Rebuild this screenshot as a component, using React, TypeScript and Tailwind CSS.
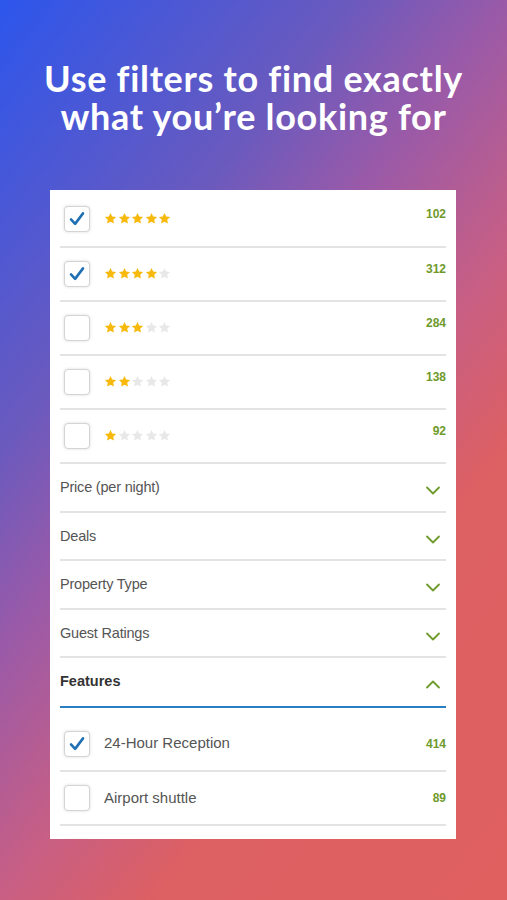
import React from 'react';

const starRows = [
  { stars: 5, count: 102, checked: true },
  { stars: 4, count: 312, checked: true },
  { stars: 3, count: 284, checked: false },
  { stars: 2, count: 138, checked: false },
  { stars: 1, count: 92, checked: false },
];

const sections = ['Price (per night)', 'Deals', 'Property Type', 'Guest Ratings'];

const features = [
  { name: '24-Hour Reception', count: 414, checked: true },
  { name: 'Airport shuttle', count: 89, checked: false },
];

function Star({ filled }: { filled: boolean }) {
  return (
    <svg width="13" height="13" viewBox="0 0 24 24">
      <path
        d="M12 1.8l3.1 6.6 7.2.9-5.3 5 1.4 7.1L12 17.9l-6.4 3.5 1.4-7.1-5.3-5 7.2-.9z"
        fill={filled ? '#f6b90c' : '#e8e8e8'}
      />
    </svg>
  );
}

function Checkbox({ checked }: { checked: boolean }) {
  return (
    <div className="w-[26px] h-[26px] shrink-0 rounded-[4px] border border-[#d4d4d4] bg-white shadow-[0_0_3px_rgba(0,0,0,0.15)] flex items-center justify-center">
      {checked && (
        <svg width="18" height="18" viewBox="0 0 24 24">
          <path d="M4 12.5l5.5 6L20 4.5" fill="none" stroke="#1f6fb5" strokeWidth="3.4" strokeLinecap="round" strokeLinejoin="round" />
        </svg>
      )}
    </div>
  );
}

function Chevron({ up }: { up?: boolean }) {
  return (
    <svg width="16" height="10" viewBox="0 0 16 10" className="mr-[5px]">
      <path
        d={up ? 'M2 8.5l6-6 6 6' : 'M2 1.5l6 6 6-6'}
        fill="none"
        stroke="#6f9a2c"
        strokeWidth="1.8"
        strokeLinecap="round"
        strokeLinejoin="round"
      />
    </svg>
  );
}

export default function App() {
  return (
    <div
      className="w-[507px] h-[900px] overflow-hidden flex flex-col bg-[linear-gradient(128deg,#2c56ec_0%,#6a5abe_29%,#9a5aa8_42%,#c85f84_58%,#dd6062_71%,#e06060_100%)]"
      style={{ fontFamily: '"Liberation Sans", Arial, sans-serif' }}
    >
      <h1
        className="mt-[59px] text-white text-center font-bold text-[36px] leading-[38px] tracking-[0.7px]"
        style={{ fontFamily: 'Lato, "Open Sans", sans-serif' }}
      >
        Use filters to find exactly
        <br />
        what you’re looking for
      </h1>

      <div className="mt-[55px] ml-[50px] w-[406px] h-[649px] bg-white overflow-hidden px-[10px] shrink-0">
        {starRows.map((r, i) => (
          <div
            key={i}
            className={`flex items-center border-b-2 border-[#e3e3e3] ${i === 0 ? 'h-[58px] pt-[2px]' : 'h-[54px]'}`}
          >
            <div className="pl-[4px]">
              <Checkbox checked={r.checked} />
            </div>
            <div className="ml-[14px] flex items-center gap-[0.5px] -mt-[2px]">
              {[0, 1, 2, 3, 4].map((s) => (
                <Star key={s} filled={s < r.stars} />
              ))}
            </div>
            <span className="ml-auto text-[12px] font-bold text-[#6f9a2c] -mt-[10px]">{r.count}</span>
          </div>
        ))}

        {sections.map((s) => (
          <div key={s} className="h-[48.5px] flex items-center border-b-2 border-[#e3e3e3]">
            <span className="text-[14.5px] text-[#555] tracking-[-0.2px] mt-[2px]">{s}</span>
            <span className="ml-auto mt-[8px]">
              <Chevron />
            </span>
          </div>
        ))}

        <div className="h-[50px] flex items-center border-b-2 border-[#2a7fc2]">
          <span className="text-[14.5px] font-bold text-[#333]">Features</span>
          <span className="ml-auto mt-[4px]">
            <Chevron up />
          </span>
        </div>

        {features.map((f, i) => (
          <div
            key={f.name}
            className={`flex items-center border-b-2 border-[#e3e3e3] ${i === 0 ? 'h-[64px] pt-[9px]' : 'h-[54px]'}`}
          >
            <div className="pl-[4px]">
              <Checkbox checked={f.checked} />
            </div>
            <span className="ml-[14px] text-[15px] text-[#555]">{f.name}</span>
            <span className="ml-auto text-[12px] font-bold text-[#6f9a2c]">{f.count}</span>
          </div>
        ))}

        <div className="h-[54px] flex items-center">
          <div className="pl-[4px]">
            <Checkbox checked={false} />
          </div>
        </div>
      </div>
    </div>
  );
}
